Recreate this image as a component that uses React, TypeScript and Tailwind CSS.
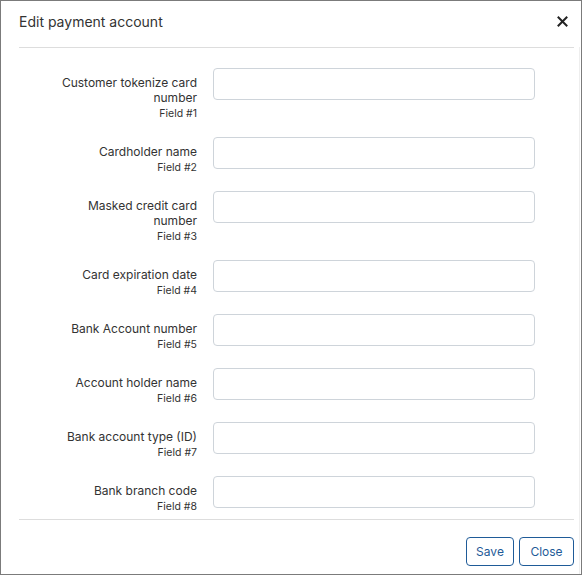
import React from "react";

const rows: { label: string[]; field: string }[] = [
  { label: ["Customer tokenize card", "number"], field: "Field #1" },
  { label: ["Cardholder name"], field: "Field #2" },
  { label: ["Masked credit card", "number"], field: "Field #3" },
  { label: ["Card expiration date"], field: "Field #4" },
  { label: ["Bank Account number"], field: "Field #5" },
  { label: ["Account holder name"], field: "Field #6" },
  { label: ["Bank account type (ID)"], field: "Field #7" },
  { label: ["Bank branch code"], field: "Field #8" },
];

export default function App() {
  return (
    <div
      className="w-[582px] h-[575px] bg-white border border-[#7b7b7b] flex flex-col overflow-hidden text-[#333333]"
      style={{ fontFamily: "Inter, 'Noto Sans', sans-serif" }}
    >
      <div className="h-[46px] flex items-center justify-between pl-[18px] pr-[13px]">
        <div className="text-[14px] leading-[18px] -mt-[5px]">Edit payment account</div>
        <svg width="11" height="11" viewBox="0 0 11 11" className="-mt-[5px]">
          <path d="M1.5 1.5 L9.5 9.5 M9.5 1.5 L1.5 9.5" stroke="#222" strokeWidth="2" strokeLinecap="square" />
        </svg>
      </div>
      <div className="flex-1 flex min-h-0">
        <div className="flex-1 flex flex-col min-h-0 pl-[18px] pr-[5px]">
          <div className="border-t border-[#dddddd] h-[472px] overflow-hidden pt-[20px]">
            {rows.map((r) => (
              <div key={r.field} className="flex items-start mb-[15px]">
                <div className="w-[178px] pt-[7px] text-right text-[12px] text-[#333]">
                  {r.label.map((l) => (
                    <div key={l} className="leading-[15px]">{l}</div>
                  ))}
                  <div className="text-[10.5px] leading-[17px]">{r.field}</div>
                </div>
                <div className="ml-[16px] w-[322px] h-[32px] rounded-[4px] border border-[#ced4da] bg-white" />
              </div>
            ))}
          </div>
          <div className="border-t border-[#dddddd] flex justify-end gap-[5px] pt-[17px]">
            <button className="h-[29px] w-[48px] rounded-[4px] border border-[#1f5b98] text-[#1f5b98] text-[12px] bg-white">
              Save
            </button>
            <button className="h-[29px] w-[55px] rounded-[4px] border border-[#1f5b98] text-[#1f5b98] text-[12px] bg-white">
              Close
            </button>
          </div>
        </div>
        <div className="w-[1px] bg-[#eeeeee] mr-[1px]" />
      </div>
    </div>
  );
}
